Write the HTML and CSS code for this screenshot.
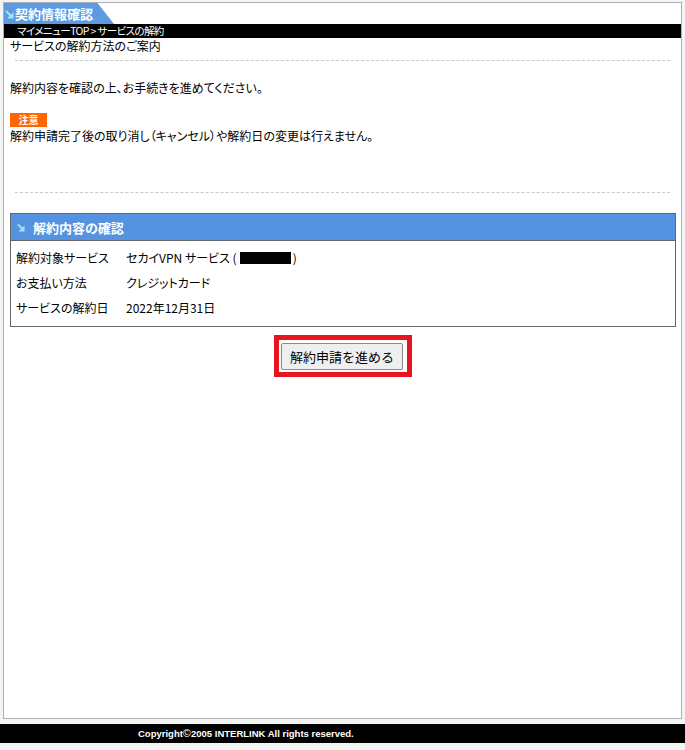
FILE: index.html
```html
<!DOCTYPE html>
<html lang="ja">
<head>
<meta charset="utf-8">
<title>契約情報確認</title>
<link rel="stylesheet" href="styles.css">
</head>
<body>
<div class="frame">
  <div class="title-tab">
    <svg class="arrow" width="9" height="10" viewBox="0 0 9 10"><path d="M1 2 L6.5 7.5" stroke="#a9e0f4" stroke-width="2" fill="none"/><polygon points="2,9.5 8.5,9.5 8.5,3" fill="#a9e0f4"/></svg>
    <span class="title-text">契約情報確認</span>
  </div>
  <div class="crumb">マイメニューTOP &gt; サービスの解約</div>
  <div class="content">
    <div class="subtitle">サービスの解約方法のご案内</div>
    <div class="dash"></div>
    <p class="text first">解約内容を確認の上、お手続きを進めてください。</p>
    <div class="badge">注意</div>
    <p class="text notice">解約申請完了後の取り消し（キャンセル）や解約日の変更は行えません。</p>
    <div class="dash lower"></div>
    <div class="box">
      <div class="box-head">
        <svg class="arrow small" width="8" height="9" viewBox="0 0 8 9"><path d="M1 1.5 L5.5 6" stroke="#a9e0f4" stroke-width="2" fill="none"/><polygon points="1.5,8.5 7.5,8.5 7.5,2.5" fill="#a9e0f4"/></svg>
        <span class="box-title">解約内容の確認</span>
      </div>
      <div class="box-body">
        <div class="row"><span class="label">解約対象サービス</span><span class="value">セカイVPN サービス (<span class="redact"></span>)</span></div>
        <div class="row"><span class="label">お支払い方法</span><span class="value">クレジットカード</span></div>
        <div class="row"><span class="label">サービスの解約日</span><span class="value">2022年12月31日</span></div>
      </div>
    </div>
    <div class="actions">
      <div class="highlight"><button class="btn" type="button">解約申請を進める</button></div>
    </div>
  </div>
</div>
<div class="footer"><span class="copy">Copyright<span class="c">©</span>2005 INTERLINK All rights reserved.</span></div>
</body>
</html>
```

FILE: styles.css
```css
html, body {
  margin: 0;
  padding: 0;
  background: #f4f4f4;
}
body {
  font-family: "Noto Sans CJK JP", "Noto Sans", sans-serif;
  font-size: 12px;
  color: #000;
  font-feature-settings: "palt";
}
.frame {
  margin: 2px 3px 0 3px;
  height: 717px;
  box-sizing: border-box;
  border: 1px solid #a9b0b8;
  background: #fff;
  overflow: hidden;
}
.title-tab {
  height: 21px;
  width: 110px;
  background: #5c9be2;
  clip-path: polygon(0 0, 85% 0, 100% 100%, 0 100%);
  display: flex;
  align-items: center;
  padding-left: 1px;
  box-sizing: border-box;
}
.arrow {
  display: block;
  flex: none;
}
.title-text {
  color: #fff;
  font-weight: bold;
  font-size: 13px;
  line-height: 21px;
  margin-left: 1px;
}
.crumb {
  height: 14px;
  background: #000;
  color: #fff;
  font-size: 10.5px;
  letter-spacing: -0.6px;
  line-height: 14px;
  padding-left: 13px;
  overflow: hidden;
}
.content {
  padding: 0 5px 0 6px;
}
.subtitle {
  height: 16px;
  line-height: 16px;
}
.dash {
  border-top: 1px dashed #c8c8c8;
  margin: 6px 6px 0 5px;
}
.dash.lower {
  margin-top: 48px;
}
.text {
  margin: 0;
  height: 16px;
  line-height: 16px;
}
.text.first {
  margin-top: 19px;
}
.text.notice {
  margin-top: 1px;
}
.badge {
  margin-top: 17px;
  width: 37px;
  height: 14px;
  background: #ff6600;
  color: #fff;
  font-weight: bold;
  font-size: 10px;
  line-height: 14px;
  text-align: center;
  overflow: hidden;
}
.box {
  margin-top: 20px;
  border: 1px solid #666;
}
.box-head {
  height: 26px;
  background: #5592e0;
  border-bottom: 1px solid #666;
  display: flex;
  align-items: center;
  padding-left: 6px;
}
.box-title {
  color: #fff;
  font-weight: bold;
  font-size: 13px;
  margin-left: 8px;
}
.box-body {
  padding: 4px 0 6px 5px;
}
.row {
  display: flex;
  height: 25px;
  align-items: center;
}
.label {
  width: 110px;
  flex: none;
}
.value {
  display: flex;
  align-items: center;
}
.redact {
  display: inline-block;
  width: 51px;
  height: 12px;
  background: #000;
  margin: 0 2px 0 3px;
}
.actions {
  display: flex;
  justify-content: center;
  margin-top: 8px;
}
.highlight {
  border: 5px solid #e8141f;
  padding: 3px 4px 2px 2px;
}
.btn {
  display: block;
  width: 122px;
  height: 27px;
  background: #efefef;
  border: 1px solid #8a8a8a;
  border-radius: 2px;
  font-family: "Noto Sans CJK JP", sans-serif;
  font-size: 13px;
  color: #000;
  padding: 0;
}
.footer {
  margin-top: 5px;
  height: 19px;
  background: #000;
  color: #fff;
  padding-left: 138px;
  font-family: "Liberation Sans", "DejaVu Sans", sans-serif;
  font-weight: bold;
  font-size: 9.5px;
  line-height: 19px;
}
.c {
  font-size: 11px;
  font-weight: normal;
}
```
